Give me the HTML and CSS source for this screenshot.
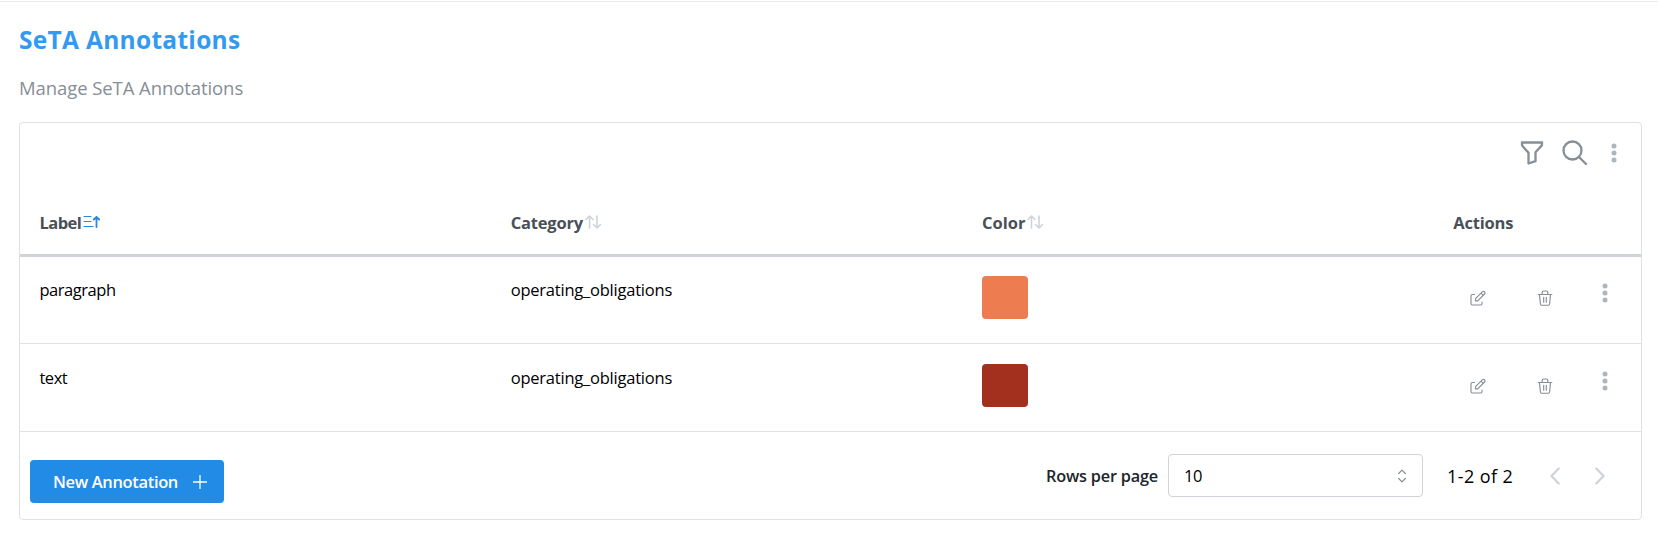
FILE: index.html
```
<!DOCTYPE html>
<html lang="en">
<head>
<meta charset="utf-8">
<title>SeTA Annotations</title>
<link rel="stylesheet" href="styles.css">
</head>
<body>
<svg class="sprite" aria-hidden="true">
  <symbol id="sort" viewBox="0 0 16 14"><path d="M1 4.500 4.500 1 8 4.500M4.500 1v12M8.500 9.500 12 13l3.500-3.500M12 13V1"/></symbol>
  <symbol id="edit" viewBox="0 0 16 16"><path d="M4.500 4.500H2.500a1.500 1.500 0 0 0-1.500 1.500V13.500A1.500 1.500 0 0 0 2.500 15H10.500a1.500 1.500 0 0 0 1.500-1.500V12M5.500 10.800V8.600L12.300 1.800a1.550 1.550 0 0 1 2.200 2.200L7.700 10.800zM11 3.100l2.200 2.200"/></symbol>
  <symbol id="trash" viewBox="0 0 16 16"><path d="M1.200 4.500h13.600M2.500 4.500l.9 9.500a1.300 1.300 0 0 0 1.300 1.200h6.600a1.300 1.300 0 0 0 1.300-1.200l.9-9.500M5.200 4.500V2.300a1.300 1.300 0 0 1 1.300-1.300h3a1.300 1.300 0 0 1 1.300 1.300V4.500M6.700 7.200v5M9.300 7.200v5"/></symbol>
  <symbol id="dots" viewBox="0 0 8 20"><circle cx="4" cy="3" r="2.500"/><circle cx="4" cy="10" r="2.500"/><circle cx="4" cy="17" r="2.500"/></symbol>
</svg>
<main class="page">
  <h1 class="title">SeTA Annotations</h1>
  <p class="subtitle">Manage SeTA Annotations</p>
  <section class="card">
    <div class="toolbar">
      <svg class="icon-filter" viewBox="0 0 24 26"><path d="M2 2.500h20v2a2 2 0 0 1-.6 1.400L15.500 12.200v9L8.500 23.500V12.700L2.600 6.200A2 2 0 0 1 2 4.800z"/></svg>
      <svg class="icon-search" viewBox="0 0 26 26"><circle cx="10.500" cy="10.500" r="9"/><path d="M17 17l7 7"/></svg>
      <svg class="dots"><use href="#dots"/></svg>
    </div>
    <div class="row head">
      <div class="cell"><span class="h-label">Label</span><svg class="sort active" viewBox="0 0 18 14"><path class="bars" d="M1 1.500h7M1 6.500h7M1 11.500h9"/><path d="M10.800 4.500 13.500 1.800l2.700 2.700M13.500 1.800V12"/></svg></div>
      <div class="cell"><span class="h-category">Category</span><svg class="sort"><use href="#sort"/></svg></div>
      <div class="cell"><span class="h-color">Color</span><svg class="sort"><use href="#sort"/></svg></div>
      <div class="cell"><span class="h-actions">Actions</span></div>
    </div>
    <div class="row body">
      <div class="cell"><span class="c-label">paragraph</span></div>
      <div class="cell"><span class="c-category">operating_obligations</span></div>
      <div class="cell"><div class="swatch orange"></div></div>
      <div class="cell actions"><svg class="act"><use href="#edit"/></svg><svg class="act"><use href="#trash"/></svg><svg class="dots"><use href="#dots"/></svg></div>
    </div>
    <div class="row body second">
      <div class="cell"><span class="c-label">text</span></div>
      <div class="cell"><span class="c-category">operating_obligations</span></div>
      <div class="cell"><div class="swatch red"></div></div>
      <div class="cell actions"><svg class="act"><use href="#edit"/></svg><svg class="act"><use href="#trash"/></svg><svg class="dots"><use href="#dots"/></svg></div>
    </div>
    <footer class="footer">
      <button class="new" type="button"><span>New Annotation</span><svg class="plus" viewBox="0 0 14 14"><path d="M7 .5v13M.5 7h13"/></svg></button>
      <div class="pager">
        <span class="rpp">Rows per page</span>
        <div class="select"><span>10</span><svg class="updown" viewBox="0 0 8 14"><path d="M.7 4.500 4 1.200l3.300 3.300M.7 9.500 4 12.800l3.300-3.300"/></svg></div>
        <span class="range">1-2 of 2</span>
        <svg class="chev prev" viewBox="0 0 10 18"><path d="M8.700 1.500 1.500 9l7.200 7.500"/></svg>
        <svg class="chev" viewBox="0 0 10 18"><path d="M1.300 1.500 8.500 9l-7.200 7.500"/></svg>
      </div>
    </footer>
  </section>
</main>
</body>
</html>
```
FILE: styles.css
```
* { box-sizing: border-box; }
body { margin: 0; background: #fff; color: #000; font-family: "Open Sans", "Noto Sans", sans-serif; font-size: 16.5px; line-height: 24px; }
svg { display: block; flex: none; fill: none; stroke: currentColor; stroke-linecap: round; stroke-linejoin: round; }
span { white-space: nowrap; }
.sprite { position: absolute; width: 0; height: 0; }
.page { height: 535px; margin-top: 1px; border-top: 1px solid #e9ecef; padding: 20px 16px 0 19px; overflow: hidden; }
.title { margin: 0; height: 36px; font-size: 24.5px; line-height: 36px; font-weight: 700; letter-spacing: .3px; color: #339af0; }
.subtitle { margin: 16px 0 0; height: 28px; font-size: 18.5px; line-height: 28px; letter-spacing: -.08px; color: #868e96; }
.card { margin-top: 20px; height: 398px; border: 1px solid #dee2e6; border-radius: 4px; }
.toolbar { height: 60px; display: flex; justify-content: flex-end; align-items: flex-start; padding: 17px 23px 0 0; color: #868e96; }
.icon-filter { width: 24px; height: 26px; stroke-width: 2.3; }
.icon-search { width: 26px; height: 26px; margin-left: 18px; stroke-width: 2.3; }
.dots { width: 8px; height: 20px; fill: #adb5bd; stroke: none; }
.toolbar .dots { margin: 3px 0 0 22px; }
.row { display: grid; grid-template-columns: 471.3px 471.3px 471.3px 1fr; }
.cell { padding-left: 19.4px; }
.head { height: 74px; padding-top: 28px; border-bottom: 3px solid #ced4da; color: #495057; font-weight: 700; }
.head .cell { display: flex; }
.h-label { letter-spacing: -.5px; }
.h-category, .h-actions { letter-spacing: -.2px; }
.sort { width: 16px; height: 14px; margin: 4px 0 0 2px; color: #ced4da; stroke-width: 1.6; }
.sort.active { width: 18px; color: #228be6; stroke-width: 1.8; }
.bars { stroke-width: 1.2; }
.body { height: 87px; border-bottom: 1px solid #dee2e6; padding-top: 19px; }
.body.second { height: 88px; padding-top: 20px; }
.cell > span { display: block; }
.body .cell > span { margin-top: 2px; }
.c-label { letter-spacing: -.45px; }
.c-category { letter-spacing: -.22px; }
.swatch { width: 46px; height: 43px; border-radius: 4px; }
.orange { background: #ed7d50; }
.red { background: #a3301f; }
.actions { display: flex; padding-left: 36px; color: #868e96; }
.act { width: 16px; height: 16px; margin: 14px 51px 0 0; stroke-width: 1.15; }
.actions .dots { margin: 7px 0 0 -3px; }
.footer { display: flex; justify-content: space-between; padding: 22px 36px 0 10px; }
.new { display: flex; align-items: center; width: 194px; height: 43px; margin-top: 6px; padding: 0 0 0 23px; border: 0; border-radius: 4px; background: #228be6; color: #fff; font: 600 16.5px/24px "Open Sans", sans-serif; letter-spacing: -.35px; }
.new span { width: 125px; text-align: left; }
.plus { width: 14px; height: 14px; margin-left: 15px; stroke-width: 1.3; }
.pager { display: flex; align-items: center; height: 43px; }
.rpp { width: 122px; font-weight: 600; font-size: 16.3px; letter-spacing: -.2px; color: #212529; }
.select { display: flex; align-items: center; justify-content: space-between; width: 255px; height: 43px; padding: 0 16px 0 15px; border: 1px solid #ced4da; border-radius: 4px; letter-spacing: -.4px; }
.updown { width: 8px; height: 14px; color: #868e96; stroke-width: 1.2; }
.range { width: 103px; margin-left: 24px; font-size: 18px; line-height: 24px; letter-spacing: .42px; }
.chev { width: 10px; height: 18px; color: #ced4da; stroke-width: 2.3; }
.prev { margin-right: 35px; }
```
